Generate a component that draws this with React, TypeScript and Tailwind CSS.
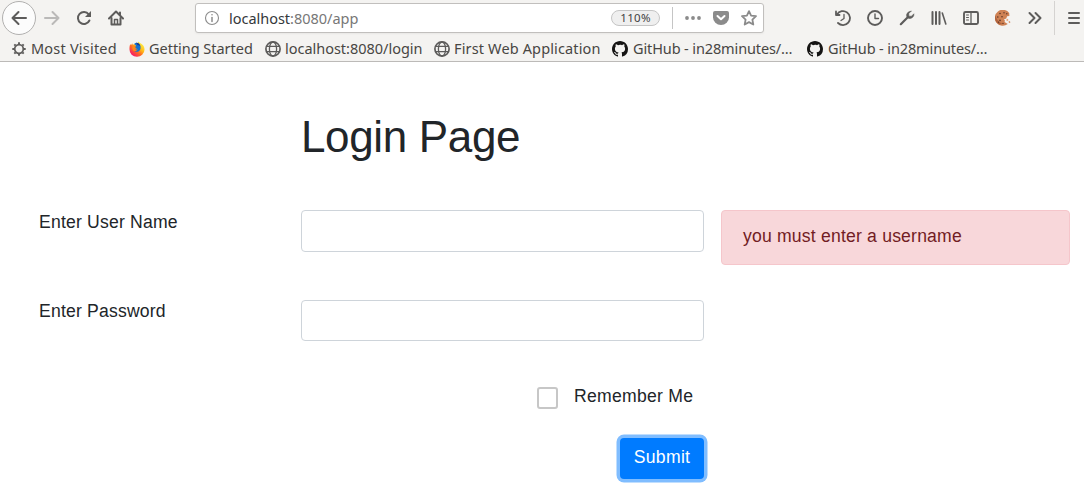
import React from "react";

type IconProps = { children: React.ReactNode; className?: string };

function Icon({ children, className = "" }: IconProps) {
  return (
    <svg viewBox="0 0 16 16" width="16" height="16" fill="none" stroke="currentColor" strokeWidth="2" strokeLinecap="round" strokeLinejoin="round" className={"shrink-0 " + className}>
      {children}
    </svg>
  );
}

function Cell({ children, label }: { children: React.ReactNode; label: string }) {
  return (
    <button aria-label={label} className="flex h-8 w-8 shrink-0 items-center justify-center">
      {children}
    </button>
  );
}

function Globe() {
  return (
    <Icon>
      <circle cx="8" cy="8" r="7.1" strokeWidth="1.7" />
      <ellipse cx="8" cy="8" rx="3.6" ry="7" strokeWidth="1.3" />
      <path d="M2 5.3h12M2 10.7h12" strokeWidth="1.3" />
    </Icon>
  );
}

function Gear() {
  return (
    <Icon>
      <circle cx="8" cy="8" r="4.3" strokeWidth="1.7" />
      <path d="M8 3V1.3M8 13v1.7M3 8H1.3M13 8h1.7M4.5 4.5 3.3 3.3M11.5 4.5l1.2-1.2M4.5 11.5l-1.2 1.2M11.5 11.5l1.2 1.2" strokeWidth="1.9" strokeLinecap="butt" />
    </Icon>
  );
}

function Firefox() {
  return (
    <svg viewBox="0 0 16 16" width="16" height="16" className="shrink-0">
      <defs>
        <linearGradient id="fx" x1="0.85" y1="0.1" x2="0.15" y2="0.9">
          <stop offset="0" stopColor="#fff04a" />
          <stop offset="0.35" stopColor="#ffbd18" />
          <stop offset="0.6" stopColor="#ff6b24" />
          <stop offset="1" stopColor="#f5156c" />
        </linearGradient>
      </defs>
      <path d="M1.3 3.1 2 4.2 3.2 2.2l.6 1.5C5.8 2.8 7 3 8 3.4L9.4.5c1 1.8 3 1.7 4.4 3.6 1.2 1.3 1.8 3 1.7 4.7A7.5 7.1 0 0 1 .5 8.6C.4 6.3.6 4.6 1.3 3.1z" fill="url(#fx)" />
      <path d="M5.1 3C7.5.6 11 2.2 11.5 5.6c.6 3.5-1.7 5.6-4.2 5.2-1.7-.3-2.6-1.3-2.7-2.5 1.3.8 2.4.3 3.3-.6-1-.8-2.6-.5-3.1-1.8 1-.2 1.8-.6 2.3-1.4z" fill="#1473d2" />
      <path d="M7 1.8c2-.2 4 1.2 4.5 3.8-.7-1.1-1.7-1.5-2.8-1.4z" fill="#1b3890" />
      <path d="M3.7 5.1c1.6-.5 2.2.4 3.6.5-.2.9-1.2 1-1.6 1.7 0 1.4 1.5 1.7 3 .9-.5 1.4-2.9 2.6-4.5 1.2C3 8.3 3.1 6.3 3.7 5.1z" fill="#ff8b18" />
    </svg>
  );
}

function GitHub() {
  return (
    <svg viewBox="0 0 16 16" width="16" height="16" fill="#161514" className="shrink-0">
      <path d="M8 0C3.58 0 0 3.58 0 8c0 3.54 2.29 6.53 5.47 7.59.4.07.55-.17.55-.38 0-.19-.01-.82-.01-1.49-2.01.37-2.53-.49-2.69-.94-.09-.23-.48-.94-.82-1.13-.28-.15-.68-.52-.01-.53.63-.01 1.08.58 1.23.82.72 1.21 1.87.87 2.33.66.07-.52.28-.87.51-1.07-1.78-.2-3.64-.89-3.64-3.95 0-.87.31-1.59.82-2.15-.08-.2-.36-1.02.08-2.12 0 0 .67-.21 2.2.82A7.6 7.6 0 0 1 8 3.87c.68 0 1.36.09 2 .27 1.53-1.04 2.2-.82 2.2-.82.44 1.1.16 1.92.08 2.12.51.56.82 1.27.82 2.15 0 3.07-1.87 3.75-3.65 3.95.29.25.54.73.54 1.48 0 1.07-.01 1.93-.01 2.2 0 .21.15.46.55.38A8.01 8.01 0 0 0 16 8c0-4.42-3.58-8-8-8z" />
    </svg>
  );
}

function Cookie() {
  return (
    <svg viewBox="0 0 16 16" width="16" height="16" className="shrink-0">
      <path d="M14.2 2.9A8 8 0 1 0 12.800 14l-2-1.300-1.200-.700.3-1.500-1-1.100 2.400-.9.8-2.200 2.300-.4z" fill="#cf8254" />
      <path d="M4 14.5A8 8 0 0 1 .4 5.5C2 10 3.5 12 8 14z" fill="#b0633e" />
      <g fill="#5b3528">
        <circle cx="5" cy="3.5" r=".8" /><circle cx="9" cy="2.8" r=".7" /><circle cx="11.8" cy="3.8" r=".7" />
        <circle cx="2.8" cy="7" r=".8" /><circle cx="7" cy="6.8" r=".8" /><circle cx="5" cy="10.4" r=".8" />
        <circle cx="8" cy="13.4" r=".7" /><circle cx="3.5" cy="12.2" r=".6" />
      </g>
      <path d="m11 10 1.500-1.200 1 1.200-1.200 1z" fill="#e9a074" />
      <path d="m13.400 11.800 1.500-.7.500 1.300-1.200.5z" fill="#d58a60" />
    </svg>
  );
}

const bookmarks = [
  { icon: <Gear />, label: "Most Visited", box: "w-[118px]", text: "tracking-[0.21px]" },
  { icon: <Firefox />, label: "Getting Started", box: "w-[136px]", text: "tracking-[-0.03px]" },
  { icon: <Globe />, label: "localhost:8080/login", box: "w-[169px]", text: "tracking-[-0.02px]" },
  { icon: <Globe />, label: "First Web Application", box: "w-[178px]", text: "tracking-[0.14px]" },
  { icon: <GitHub />, label: "GitHub - in28minutes/…", box: "w-[195px]", text: "ml-px tracking-[-0.12px]" },
  { icon: <GitHub />, label: "GitHub - in28minutes/…", box: "w-[195px]", text: "ml-px tracking-[-0.12px]" },
];

function Toolbar() {
  return (
    <div className="flex h-9 items-center pl-[2px] text-[#5d5c5b]">
      <button aria-label="Back" className="flex h-[34px] w-[34px] shrink-0 items-center justify-center rounded-full border border-[#b1b0af] bg-[#fcfcfc]">
        <Icon><path d="M15 8H1.5M7.5 2l-6 6 6 6" /></Icon>
      </button>
      <Cell label="Forward"><Icon className="text-[#bab9b8]"><path d="M1 8h13.5M8.500 2l6 6-6 6" /></Icon></Cell>
      <Cell label="Reload"><Icon><path d="M13.4 10.5A6 6 0 1 1 12.700 4.300" /><path d="M15 1v6H9z" fill="currentColor" stroke="none" /></Icon></Cell>
      <Cell label="Home">
        <Icon><path d="M1 8.500 8 1.500l7 7" /><path d="M3.500 8v6.500h9V8M12 2.500v2" /><path d="M6.500 14V9.500h3V14" strokeWidth="1.500" /></Icon>
      </Cell>
      <div className="ml-[63px] flex h-[30px] w-[569px] shrink-0 items-center rounded-[3px] border border-[#c1bfbd] bg-white shadow-[0_1px_2px_rgba(0,0,0,0.05)]">
        <Icon className="ml-2 text-[#8b8b8b]"><circle cx="8" cy="8" r="6.500" strokeWidth="1.100" /><path d="M8 7.500v4" strokeWidth="1.500" /><path d="M8 4.700v.1" strokeWidth="1.600" /></Icon>
        <div className="-mt-px ml-[9px] w-[382px] text-[14.5px] leading-5 tracking-[-0.02px] text-[#35383b]">localhost<span className="text-[#777]">:8080/app</span></div>
        <span className="flex h-4 w-[49px] items-center justify-center rounded-full border border-[#c5c5c5] bg-[#efefef] text-[11.5px] tracking-[0.3px] text-[#424242]">110%</span>
        <span className="ml-3 h-[22px] w-px bg-[#c5c5c5]" />
        <svg className="ml-3 text-[#8b8b8b]" width="16" height="16" viewBox="0 0 16 16" fill="currentColor"><circle cx="2" cy="8" r="1.900" /><circle cx="8" cy="8" r="1.900" /><circle cx="14" cy="8" r="1.900" /></svg>
        <svg className="ml-3 text-[#8b8b8b]" width="16" height="16" viewBox="0 0 16 16"><path fill="currentColor" d="M2 1h12a2 2 0 0 1 2 2v4.500a8 7.500 0 0 1-16 0V3a2 2 0 0 1 2-2z" /><path d="m4.500 6 3.500 3.300L11.500 6" fill="none" stroke="white" strokeWidth="2" strokeLinecap="round" strokeLinejoin="round" /></svg>
        <Icon className="ml-3 text-[#8b8b8b]"><path strokeWidth="1.800" d="m8 1.100 2.100 4.500 4.900.6-3.600 3.400.9 4.900L8 12.100l-4.300 2.400.9-4.900L1 6.200l4.900-.6z" /></Icon>
      </div>
      <div className="ml-[63px] flex shrink-0">
        <Cell label="History"><Icon><path d="M2 4.400A7 7 0 1 1 3 13M1 1.500v3.500h3.500" strokeWidth="1.800" /><path d="M9 4.500v4l-3 2" strokeWidth="1.300" /></Icon></Cell>
        <Cell label="Recent"><Icon><circle cx="8" cy="8" r="7" strokeWidth="1.900" /><path d="M8 4v4.500h3.500" strokeWidth="1.400" /></Icon></Cell>
        <Cell label="Developer tools"><Icon><path d="M1.800 14.200 9 7" strokeWidth="2.200" /><path d="M12 1.200 9.800 3.500v2.700h2.700l2.400-2.400a4.200 4.200 0 0 1-5.400 4.500L7.700 6.500A4.200 4.200 0 0 1 12 1.200z" fill="currentColor" strokeWidth=".6" /></Icon></Cell>
        <Cell label="Library"><Icon><path d="M1.500 2v12M5 2v12M8.500 2v12" /><path d="m11.300 3 3.500 11" strokeWidth="1.600" /></Icon></Cell>
        <Cell label="Sidebar"><Icon><rect x="1" y="2" width="14" height="12" rx="1.500" strokeWidth="1.900" /><path d="M8 2v12" strokeWidth="1.300" /><path d="M3.500 5h2M3.500 7.500h2M3.500 10h2" strokeWidth="1" /></Icon></Cell>
        <Cell label="Cookies"><Cookie /></Cell>
        <Cell label="More tools"><Icon><path d="m2.500 3 5 5-5 5M8.500 3l5 5-5 5" /></Icon></Cell>
      </div>
      <span className="ml-[3px] h-[34px] w-px shrink-0 bg-[#d5d3d1]" />
      <svg className="ml-[11px] shrink-0" width="16" height="16" viewBox="0 0 16 16" stroke="currentColor" strokeWidth="2" strokeLinecap="round"><path d="M3 3h10M3 8h10M3 13h10" /></svg>
    </div>
  );
}

export default function App() {
  return (
    <div className="h-[493px] w-[1084px] overflow-hidden bg-white font-['Liberation_Sans',sans-serif] text-[17.6px] leading-[26px] tracking-[0.19px] text-[#212529]">
      <header className="h-[62px] border-b border-[#bcbab8] bg-[#f4f3f1] font-['Noto_Sans',sans-serif] tracking-normal">
        <Toolbar />
        <nav className="flex h-[25px] items-center pl-[11px] text-[#5d5c5b]">
          {bookmarks.map((b, i) => (
            <a key={i} className={"flex h-5 shrink-0 items-center gap-1 " + b.box}>
              {b.icon}
              <span className={"-mt-0.5 whitespace-nowrap text-[14.5px] leading-5 text-[#484643] " + b.text}>{b.label}</span>
            </a>
          ))}
        </nav>
      </header>
      <main className="flex flex-col">
        <h1 className="ml-[301px] mt-[48px] h-[53px] text-[44px] leading-[53px] tracking-[-0.35px]">Login Page</h1>
        <div className="mt-[47px] flex h-[55px] items-start pl-[39px]">
          <label htmlFor="user" className="w-[262px] leading-6">Enter User Name</label>
          <input id="user" className="h-[42px] w-[403px] rounded-[4px] border border-[#ced4da] bg-white" />
          <div className="ml-[17px] h-[55px] w-[349px] rounded-[4px] border border-[#f5c6cb] bg-[#f8d7da] py-3 pl-[21px] text-[#721c24]">you must enter a username</div>
        </div>
        <div className="mt-[35px] flex h-[41px] items-start pl-[39px]">
          <label htmlFor="pass" className="w-[262px] leading-[22px]">Enter Password</label>
          <input id="pass" type="password" className="h-[41px] w-[403px] rounded-[4px] border border-[#ced4da] bg-white" />
        </div>
        <div className="ml-[537px] mt-[42px] flex h-[26px] items-center">
          <input id="remember" type="checkbox" className="mt-[4px] h-[22px] w-[21px] appearance-none rounded-[3px] border-2 border-[#c7c7c7] bg-white" />
          <label htmlFor="remember" className="ml-4 tracking-[0.26px]">Remember Me</label>
        </div>
        <button className="ml-[620px] mt-[29px] h-[41px] w-[84px] rounded-[4px] bg-[#007bff] pb-[3px] tracking-[0.3px] text-white shadow-[0_0_0_3.5px_#80bdff]">Submit</button>
      </main>
    </div>
  );
}
